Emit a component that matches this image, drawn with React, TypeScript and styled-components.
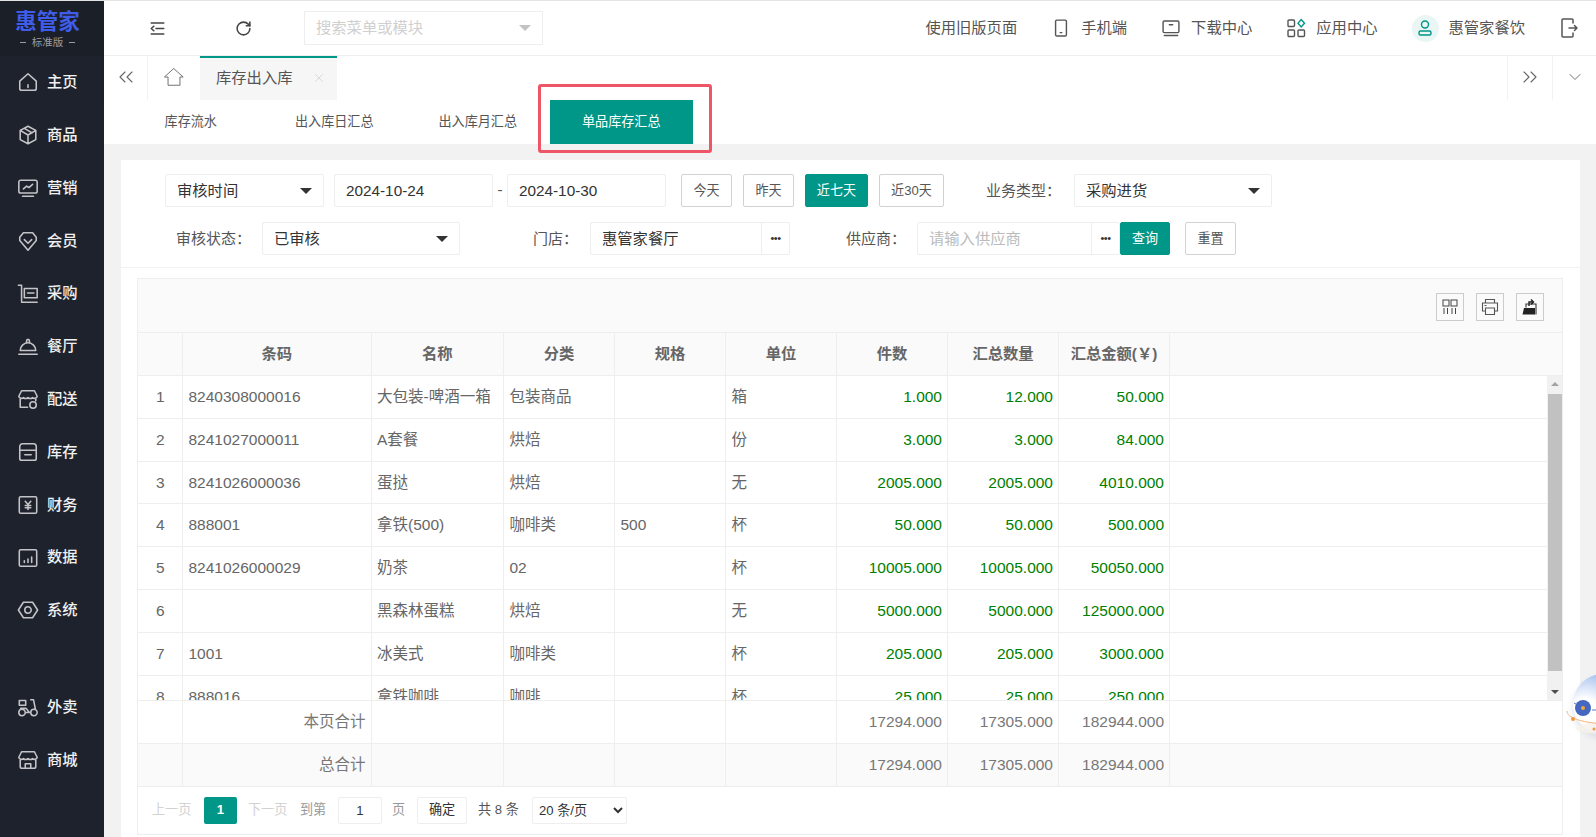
import React from 'react'
import styled, { createGlobalStyle } from 'styled-components'
import { ChevronDown, ChevronsLeft, ChevronsRight, RotateCw, X } from 'lucide-react'

const font = `"Liberation Sans", "Noto Sans CJK SC", sans-serif`
const teal = '#009688'
const COLS = '45px 188.5px 132.5px 111px 111px 111px 111px 111px 111px'

const navTop = [
  { label: '主页', d: 'M12 3 21 11v8a2 2 0 0 1-2 2H5a2 2 0 0 1-2-2v-8ZM12 15v3' },
  { label: '商品', d: 'M12 2.500 20.500 7v10L12 21.500 3.500 17V7ZM3.500 7l8.500 5 8.500-5M12 12v9.500M8 4.700l8.500 5' },
  { label: '营销', d: 'M4 3.500h16a2 2 0 0 1 2 2v10a2 2 0 0 1-2 2H4a2 2 0 0 1-2-2v-10a2 2 0 0 1 2-2ZM6 21h12M7 13l3.500-3 2.500 1.500L17 8' },
  { label: '会员', d: 'M12 22 3 11.500V8l4-5h10l4 5v3.500ZM8 10.500l4 4 4-4' },
  { label: '采购', d: 'M1.500 2.500H5V20M8 6h14v10H8ZM11.500 11h7M5 21h17' },
  { label: '餐厅', d: 'M3.500 17a8.500 8.500 0 0 1 17 0ZM10 8.500 11 5h2l1 3.500M2 21h20' },
  { label: '配送', d: 'M5 3h14l3 6a3 3 0 0 1-5 1.500 3.500 3.500 0 0 1-5 0 3.500 3.500 0 0 1-5 0A3 3 0 0 1 2 9ZM3.500 12v9h8M20.500 12v2M14 18.500a3.500 3.500 0 1 0 7 0 3.500 3.500 0 1 0-7 0' },
  { label: '库存', d: 'M6 3h12a3 3 0 0 1 3 3v4H3V6a3 3 0 0 1 3-3ZM3 10v9a2 2 0 0 0 2 2h14a2 2 0 0 0 2-2v-9M8.500 15h7' },
  { label: '财务', d: 'M4 3h16a1.500 1.500 0 0 1 1.500 1.500v15A1.500 1.500 0 0 1 20 21H4a1.500 1.500 0 0 1-1.500-1.500v-15A1.500 1.500 0 0 1 4 3ZM9 8l3 3.500L15 8M9 12.500h6M9 15h6M12 11.500V17' },
  { label: '数据', d: 'M4 3h16a1.500 1.500 0 0 1 1.500 1.500v15A1.500 1.500 0 0 1 20 21H4a1.500 1.500 0 0 1-1.500-1.500v-15A1.500 1.500 0 0 1 4 3ZM8 17v-2M12 17v-4M16 17v-6' },
  { label: '系统', d: 'M7 3.500h10L22.500 12 17 20.500H7L1.500 12ZM8.500 12a3.500 3.500 0 1 0 7 0 3.500 3.500 0 1 0-7 0' },
]

const navBottom = [
  { label: '外卖', d: 'M2 18a3.500 3.500 0 1 0 7 0 3.500 3.500 0 1 0-7 0M15 18a3.500 3.500 0 1 0 7 0 3.500 3.500 0 1 0-7 0M2.500 5h7v5h-7ZM4 13.500h6l3 4M15 4h3l2 10M9 18h6' },
  { label: '商城', d: 'M5 3h14l3 6a3 3 0 0 1-5 1.500 3.500 3.500 0 0 1-5 0 3.500 3.500 0 0 1-5 0A3 3 0 0 1 2 9ZM3.500 12v7a2 2 0 0 0 2 2h13a2 2 0 0 0 2-2v-7M9 21v-5h6v5' },
]

const rows = [
  ['1', '8240308000016', '大包装-啤酒一箱', '包装商品', '', '箱', '1.000', '12.000', '50.000'],
  ['2', '8241027000011', 'A套餐', '烘焙', '', '份', '3.000', '3.000', '84.000'],
  ['3', '8241026000036', '蛋挞', '烘焙', '', '无', '2005.000', '2005.000', '4010.000'],
  ['4', '888001', '拿铁(500)', '咖啡类', '500', '杯', '50.000', '50.000', '500.000'],
  ['5', '8241026000029', '奶茶', '02', '', '杯', '10005.000', '10005.000', '50050.000'],
  ['6', '', '黑森林蛋糕', '烘焙', '', '无', '5000.000', '5000.000', '125000.000'],
  ['7', '1001', '冰美式', '咖啡类', '', '杯', '205.000', '205.000', '3000.000'],
  ['8', '888016', '拿铁咖啡', '咖啡', '', '杯', '25.000', '25.000', '250.000'],
]

const heads = ['', '条码', '名称', '分类', '规格', '单位', '件数', '汇总数量', '汇总金额(￥)']

function Glyph({ d, size = 20 }: { d: string; size?: number }) {
  return (
    <svg width={size} height={size} viewBox="0 0 24 24" fill="none" stroke="currentColor" strokeWidth="1.7" strokeLinecap="round" strokeLinejoin="round">
      <path d={d} />
    </svg>
  )
}

function Robot() {
  return (
    <svg width="36" height="76" viewBox="0 0 36 76">
      <defs>
        <radialGradient id="ball" cx="0.2" cy="0.62" r="0.85">
          <stop offset="0.25" stopColor="#ffffff" />
          <stop offset="1" stopColor="#7ea5e6" />
        </radialGradient>
        <filter id="glow" x="-30%" y="-30%" width="160%" height="160%">
          <feGaussianBlur stdDeviation="3" />
        </filter>
      </defs>
      <circle cx="37" cy="37" r="30" fill="#b8bfd0" opacity="0.45" filter="url(#glow)" />
      <circle cx="37" cy="33" r="30" fill="url(#ball)" />
      <ellipse cx="36" cy="57" rx="26" ry="6" fill="#f7f2ea" opacity="0.8" />
      <path d="M8 32 18 37M26 39h10" stroke="#5d78c8" strokeWidth="1" />
      <circle cx="17" cy="37" r="8" fill="#4468c0" />
      <circle cx="17" cy="37" r="2" fill="#f3a43c" />
      <path d="M1 40c0 7 14 11 35 13" fill="none" stroke="#f3b478" strokeWidth="1" />
      <circle cx="7" cy="48" r="2" fill="#f09a3c" />
      <circle cx="28" cy="58" r="1.500" fill="#f09a3c" />
    </svg>
  )
}

export default function App() {
  return (
    <Page>
      <GlobalStyle />
      <Sidebar>
        <Logo>
          <LogoName>惠管家</LogoName>
          <LogoEdition>标准版</LogoEdition>
        </Logo>
        <NavGroup>
          {navTop.map((n) => (
            <NavItem key={n.label}>
              <Glyph size={22} d={n.d} />
              {n.label}
            </NavItem>
          ))}
        </NavGroup>
        <NavGroup $gap>
          {navBottom.map((n) => (
            <NavItem key={n.label}>
              <Glyph size={22} d={n.d} />
              {n.label}
            </NavItem>
          ))}
        </NavGroup>
      </Sidebar>

      <Main>
        <Header>
          <HeaderTool $w={107}>
            <Glyph size={19} d="M4 5h16M10 12h10M4 19h16M7.500 9 4 12l3.500 3" />
          </HeaderTool>
          <HeaderTool $w={93} $inset={29}>
            <RotateCw size={17} strokeWidth={2.2} />
          </HeaderTool>
          <SearchBox>
            搜索菜单或模块
            <Caret $color="#c2c2c2" />
          </SearchBox>
          <HeaderRight>
            <HeaderLink>使用旧版页面</HeaderLink>
            <HeaderLink>
              <Glyph d="M7 2.500h10a1.500 1.500 0 0 1 1.500 1.500v16a1.500 1.500 0 0 1-1.500 1.500H7A1.500 1.500 0 0 1 5.500 20V4A1.500 1.500 0 0 1 7 2.500ZM11 17.500h2" />
              手机端
            </HeaderLink>
            <HeaderLink>
              <Glyph d="M4 3.500h16a1.500 1.500 0 0 1 1.500 1.500v11a1.500 1.500 0 0 1-1.500 1.500H4A1.500 1.500 0 0 1 2.500 16V5A1.500 1.500 0 0 1 4 3.500ZM4 21h16M10 8h4" />
              下载中心
            </HeaderLink>
            <HeaderLink>
              <AppsIcon />
              应用中心
            </HeaderLink>
            <HeaderLink>
              <Avatar>
                <svg width="16" height="18" viewBox="0 0 16 18" fill="none" stroke={teal} strokeWidth="1.4">
                  <circle cx="8" cy="5.500" r="3.500" />
                  <rect x="2" y="12" width="12" height="4" rx="1.500" />
                </svg>
              </Avatar>
              惠管家餐饮
            </HeaderLink>
            <LogoutIcon />
          </HeaderRight>
        </Header>

        <TabBar>
          <TabEdge $w={44}>
            <ChevronsLeft size={24} strokeWidth={1.1} />
          </TabEdge>
          <TabEdge $w={52} $plain>
            <Glyph size={22} d="M12 3 22 12h-3.500v9h-13v-9H2Z" />
          </TabEdge>
          <ActiveTab>
            库存出入库
            <X size={14} strokeWidth={1.1} color="#c8c8c8" />
          </ActiveTab>
          <TabEdge $w={45} $push $side>
            <ChevronsRight size={24} strokeWidth={1.1} />
          </TabEdge>
          <TabEdge $w={44} $side>
            <ChevronDown size={20} strokeWidth={1.1} />
          </TabEdge>
        </TabBar>

        <SubTabs>
          <SubTab>库存流水</SubTab>
          <SubTab>出入库日汇总</SubTab>
          <SubTab>出入库月汇总</SubTab>
          <SubTab $active>单品库存汇总</SubTab>
          <Highlight />
        </SubTabs>

        <Body>
          <Card>
            <Filters>
              <FilterRow>
                <Field $w={159}>
                  审核时间
                  <Caret />
                </Field>
                <Field $w={159} $ml={10}>2024-10-24</Field>
                <Dash>-</Dash>
                <Field $w={159}>2024-10-30</Field>
                <RangeBtn $w={51} $ml={15}>今天</RangeBtn>
                <RangeBtn $w={51} $ml={11}>昨天</RangeBtn>
                <RangeBtn $w={63} $ml={11} $on>近七天</RangeBtn>
                <RangeBtn $w={65} $ml={11}>近30天</RangeBtn>
                <Label $w={70} $ml={42}>业务类型：</Label>
                <Field $w={198} $ml={18}>
                  采购进货
                  <Caret />
                </Field>
              </FilterRow>
              <FilterRow>
                <Label $w={68} $ml={11}>审核状态：</Label>
                <Field $w={198} $ml={18}>
                  已审核
                  <Caret />
                </Field>
                <Label $w={39} $ml={73}>门店：</Label>
                <Field $w={200} $ml={18}>
                  惠管家餐厅
                  <MoreBtn>•••</MoreBtn>
                </Field>
                <Label $w={54} $ml={56}>供应商：</Label>
                <Field $w={203} $ml={17} $muted>
                  请输入供应商
                  <MoreBtn>•••</MoreBtn>
                </Field>
                <RangeBtn $w={50} $on>查询</RangeBtn>
                <RangeBtn $w={51} $ml={15}>重置</RangeBtn>
              </FilterRow>
            </Filters>

            <TableBox>
              <Toolbar>
                <ToolBtn>
                  <svg width="16" height="16" viewBox="0 0 16 16" fill="none" stroke="#444" strokeWidth="1">
                    <rect x="1" y="1" width="6" height="6" />
                    <rect x="9" y="1" width="6" height="6" />
                    <path d="M2 9v6M5.500 9v6M10 9v6M13.500 9v6" />
                  </svg>
                </ToolBtn>
                <ToolBtn>
                  <svg width="18" height="18" viewBox="0 0 18 18" fill="none" stroke="#555" strokeWidth="1.100">
                    <path d="M4.500 5V1.500h9V5M4.500 13H1.500V5h15v8h-3M4.500 10h9v6.500h-9ZM3.500 7.500h2" />
                  </svg>
                </ToolBtn>
                <ToolBtn>
                  <svg width="18" height="18" viewBox="0 0 18 18">
                    <path d="M1.500 16.500 3 10h11v6.500Z" fill="#222" />
                    <path d="M5 9.500V6h10v10.500" fill="none" stroke="#333" strokeWidth="1.100" />
                    <path d="M8 8V4h3.500M10 1.500l2.500 2.500L10 6.500" fill="none" stroke="#222" strokeWidth="1.400" />
                  </svg>
                </ToolBtn>
              </Toolbar>

              <Row $shade $head>
                {heads.map((h, i) => (
                  <HeadCell key={i}>{h}</HeadCell>
                ))}
              </Row>

              <RowsWrap>
                <RowsClip>
                  {rows.map((r) => (
                    <Row key={r[0]}>
                      {r.map((c, i) => (
                        <Cell key={i} $center={i === 0} $num={i > 5}>
                          {c}
                        </Cell>
                      ))}
                    </Row>
                  ))}
                </RowsClip>
                <ScrollTrack>
                  <ScrollArrow $up />
                  <ScrollThumb />
                  <ScrollArrow />
                </ScrollTrack>
              </RowsWrap>

              <TotalRow label="本页合计" />
              <TotalRow label="总合计" shade />

              <Pager>
                <PagerText $c="#d2d2d2" $w={38}>上一页</PagerText>
                <PageNo>1</PageNo>
                <PagerText $c="#d2d2d2" $w={40} $ml={11}>下一页</PagerText>
                <PagerText $c="#999" $w={27} $ml={12}>到第</PagerText>
                <PageInput defaultValue="1" />
                <PagerText $c="#999" $w={14} $ml={10}>页</PagerText>
                <PageConfirm>确定</PageConfirm>
                <PagerText $c="#555" $w={43} $ml={11}>共 8 条</PagerText>
                <PageSize defaultValue="20">
                  <option value="20">20 条/页</option>
                </PageSize>
              </Pager>
            </TableBox>
          </Card>
        </Body>
      </Main>

      <Floater>
        <Robot />
      </Floater>
    </Page>
  )
}

function TotalRow({ label, shade }: { label: string; shade?: boolean }) {
  return (
    <Row $shade={shade} $foot>
      <Cell />
      <Cell $right>{label}</Cell>
      <Cell />
      <Cell />
      <Cell />
      <Cell />
      <Cell $right>17294.000</Cell>
      <Cell $right>17305.000</Cell>
      <Cell $right>182944.000</Cell>
    </Row>
  )
}

function AppsIcon() {
  return (
    <svg width="20" height="20" viewBox="0 0 20 20" fill="none" stroke="#555" strokeWidth="1.400">
      <rect x="2" y="2" width="6.500" height="6.500" rx="1" />
      <rect x="2" y="12" width="6.500" height="6.500" rx="1" />
      <rect x="12" y="12" width="6.500" height="6.500" rx="1" />
      <path d="M15.200 1.500 18.500 5.200 15.200 9 12 5.200Z" stroke={teal} />
    </svg>
  )
}

function LogoutIcon() {
  return (
    <svg width="20" height="22" viewBox="0 0 20 22" fill="none" stroke="#555" strokeWidth="1.500" strokeLinecap="round" strokeLinejoin="round">
      <path d="M14 6V3a1 1 0 0 0-1-1H4a1 1 0 0 0-1 1v16a1 1 0 0 0 1 1h9a1 1 0 0 0 1-1v-3M10 11h8M15.500 8.500 18 11l-2.500 2.500" />
    </svg>
  )
}

const GlobalStyle = createGlobalStyle`
  html, body {
    margin: 0;
    height: 100%;
    overflow: hidden;
    background: #f2f2f2;
  }
  * {
    box-sizing: border-box;
  }
`

const Page = styled.div`
  position: relative;
  width: 1596px;
  height: 837px;
  display: flex;
  overflow: hidden;
  border-top: 1px solid #e4e4e4;
  font-family: ${font};
  font-size: 15.3px;
  line-height: 1.2;
  color: #555;
`

const Sidebar = styled.aside`
  width: 104px;
  flex: none;
  background: #1e222c;
  color: #e8e8e8;
`

const Logo = styled.div`
  height: 55px;
  background: #1b1f28;
  display: flex;
  flex-direction: column;
  align-items: center;
  padding: 9px 9px 0 0;
`

const LogoName = styled.div`
  font-size: 21.500px;
  line-height: 24px;
  font-weight: 700;
  color: #3f5de8;
`

const LogoEdition = styled.div`
  font-size: 10.500px;
  line-height: 14px;
  margin-top: 1px;
  color: #9a9ca2;
  display: flex;
  align-items: center;
  gap: 6px;

  &::before,
  &::after {
    content: '';
    width: 6px;
    height: 1px;
    background: #9a9ca2;
  }
`

const NavGroup = styled.nav<{ $gap?: boolean }>`
  margin-top: ${({ $gap }) => ($gap ? '44px' : '0')};
`

const NavItem = styled.div`
  height: 52.800px;
  display: flex;
  align-items: center;
  gap: 8px;
  padding-left: 17px;
  color: #f0f0f0;
  font-weight: 500;

  svg {
    color: #c4c4c8;
  }
`

const Main = styled.main`
  flex: 1;
  min-width: 0;
  display: flex;
  flex-direction: column;
`

const Header = styled.header`
  height: 55px;
  flex: none;
  background: #fff;
  border-bottom: 1px solid #f0f0f0;
  display: flex;
  align-items: center;
`

const HeaderTool = styled.div<{ $w: number; $inset?: number }>`
  width: ${({ $w }) => $w}px;
  display: flex;
  justify-content: center;
  padding-right: ${({ $inset }) => $inset || 0}px;
  color: #444;
`

const SearchBox = styled.div`
  width: 239px;
  height: 34px;
  padding: 0 11px;
  border: 1px solid #eee;
  display: flex;
  align-items: center;
  justify-content: space-between;
  color: #d0d0d0;
`

const HeaderRight = styled.div`
  margin-left: auto;
  padding-right: 17px;
  display: flex;
  align-items: center;
  gap: 34px;
`

const HeaderLink = styled.div`
  display: flex;
  align-items: center;
  gap: 10px;
  color: #555;
`

const Avatar = styled.span`
  width: 27px;
  height: 27px;
  border-radius: 50%;
  background: #e9f6f4;
  display: flex;
  align-items: center;
  justify-content: center;
`

const Caret = styled.i<{ $color?: string }>`
  margin-left: auto;
  width: 0;
  height: 0;
  border-style: solid;
  border-width: 6px 6.500px 0;
  border-color: ${({ $color }) => $color || '#333'} transparent transparent;
`

const TabBar = styled.div`
  height: 44px;
  flex: none;
  background: #fff;
  display: flex;
  box-shadow: 0 1px 2px rgba(0, 0, 0, 0.1);
  position: relative;
`

const TabEdge = styled.div<{ $w: number; $plain?: boolean; $push?: boolean; $side?: boolean }>`
  width: ${({ $w }) => $w}px;
  margin-left: ${({ $push }) => ($push ? 'auto' : '0')};
  padding-bottom: 3px;
  display: flex;
  align-items: center;
  justify-content: center;
  color: #666;
  border-right: ${({ $plain, $side }) => ($plain || $side ? 'none' : '1px solid #f2f2f2')};
  border-left: ${({ $side }) => ($side ? '1px solid #f2f2f2' : 'none')};

  svg[stroke-width='1.7'] {
    stroke-width: 1;
  }
`

const ActiveTab = styled.div`
  width: 137px;
  background: #f6f6f6;
  border-top: 2px solid ${teal};
  padding: 0 11px 2px 16px;
  display: flex;
  align-items: center;
  justify-content: space-between;
  color: #555;
`

const SubTabs = styled.div`
  position: relative;
  height: 44px;
  flex: none;
  background: #fff;
  display: flex;
  padding-left: 15px;
`

const SubTab = styled.div<{ $active?: boolean }>`
  width: 143.500px;
  display: flex;
  align-items: center;
  justify-content: center;
  font-size: 13.100px;
  background: ${({ $active }) => ($active ? teal : 'transparent')};
  color: ${({ $active }) => ($active ? '#fff' : '#555')};
`

const Highlight = styled.div`
  position: absolute;
  left: 434px;
  top: -16px;
  width: 174px;
  height: 69px;
  border: 3px solid #ee5567;
  border-radius: 3px;
  pointer-events: none;
`

const Body = styled.div`
  flex: 1;
  min-height: 0;
  padding: 16px 16px 0 17px;
`

const Card = styled.section`
  height: 100%;
  background: #fff;
`

const Filters = styled.div`
  padding: 14px 44px 12px;
  border-bottom: 1px solid #f2f2f2;
  display: flex;
  flex-direction: column;
  gap: 15px;
`

const FilterRow = styled.div`
  display: flex;
  align-items: center;
  height: 33px;
`

const Field = styled.div<{ $w: number; $ml?: number; $muted?: boolean }>`
  position: relative;
  width: ${({ $w }) => $w}px;
  height: 33px;
  margin-left: ${({ $ml }) => $ml || 0}px;
  padding: 1.500px 11px 0;
  border: 1px solid #eee;
  border-radius: 2px;
  display: flex;
  align-items: center;
  color: ${({ $muted }) => ($muted ? '#bbb' : '#333')};
  background: #fff;
`

const Dash = styled.span`
  width: 14px;
  text-align: center;
`

const RangeBtn = styled.button<{ $w: number; $ml?: number; $on?: boolean }>`
  width: ${({ $w }) => $w}px;
  height: 33px;
  margin-left: ${({ $ml }) => $ml || 0}px;
  padding: 0;
  font: inherit;
  font-size: 13.100px;
  border: 1px solid ${({ $on }) => ($on ? teal : '#d2d2d2')};
  border-radius: 2px;
  background: ${({ $on }) => ($on ? teal : '#fff')};
  color: ${({ $on }) => ($on ? '#fff' : '#555')};
`

const Label = styled.span<{ $w: number; $ml?: number }>`
  width: ${({ $w }) => $w}px;
  margin-left: ${({ $ml }) => $ml || 0}px;
  white-space: nowrap;
  font-size: 15px;
  color: #555;
`

const MoreBtn = styled.span`
  position: absolute;
  right: 0;
  top: 0;
  bottom: 0;
  width: 28px;
  border-left: 1px solid #eee;
  display: flex;
  align-items: center;
  justify-content: center;
  font-size: 11px;
  letter-spacing: -0.500px;
  color: #333;
`

const TableBox = styled.div`
  margin: 10px 17px 0 16px;
  border: 1px solid #eee;
`

const Toolbar = styled.div`
  height: 54px;
  background: #fafafa;
  border-bottom: 1px solid #eee;
  display: flex;
  align-items: center;
  justify-content: flex-end;
  gap: 12px;
  padding: 2px 18px 0 0;
`

const ToolBtn = styled.span`
  width: 28px;
  height: 28px;
  border: 1px solid #ccc;
  display: flex;
  align-items: center;
  justify-content: center;
`

const Row = styled.div<{ $shade?: boolean; $head?: boolean; $foot?: boolean }>`
  display: grid;
  grid-template-columns: ${COLS};
  height: ${({ $head }) => ($head ? '43px' : '42.800px')};
  flex: none;
  background: ${({ $shade }) => ($shade ? '#fafafa' : '#fff')};
  border-bottom: 1px solid #eee;
`

const HeadCell = styled.div`
  display: flex;
  align-items: center;
  justify-content: center;
  border-right: 1px solid #eee;
  font-weight: 700;
  color: #666;
  white-space: nowrap;
`

const Cell = styled.div<{ $center?: boolean; $num?: boolean; $right?: boolean }>`
  display: flex;
  align-items: center;
  padding: 1px 5px 0 5.500px;
  font-size: 15.500px;
  white-space: nowrap;
  overflow: hidden;
  border-right: 1px solid #eee;
  justify-content: ${({ $center, $num, $right }) => ($center ? 'center' : $num || $right ? 'flex-end' : 'flex-start')};
  color: ${({ $num, $right }) => ($num ? '#008000' : $right ? '#777' : '#666')};
`

const RowsWrap = styled.div`
  height: 325px;
  display: flex;
  justify-content: space-between;
  border-bottom: 1px solid #eee;
`

const RowsClip = styled.div`
  flex: 1;
  height: 100%;
  overflow: hidden;
`

const ScrollTrack = styled.div`
  width: 15px;
  background: #f1f1f1;
  display: flex;
  flex-direction: column;
  align-items: center;
  justify-content: space-between;
  padding: 6px 0;
`

const ScrollArrow = styled.i<{ $up?: boolean }>`
  width: 0;
  height: 0;
  border-left: 4px solid transparent;
  border-right: 4px solid transparent;
  border-${({ $up }) => ($up ? 'bottom' : 'top')}: 4px solid ${({ $up }) => ($up ? '#a3a3a3' : '#505050')};
`

const ScrollThumb = styled.div`
  width: 14px;
  height: 277px;
  margin: 4px 0 15px;
  background: #c1c1c1;
`

const Pager = styled.div`
  height: 47px;
  display: flex;
  align-items: center;
  padding-left: 14px;
  font-size: 13.100px;
`

const PagerText = styled.span<{ $c: string; $w: number; $ml?: number }>`
  width: ${({ $w }) => $w}px;
  margin-left: ${({ $ml }) => $ml || 0}px;
  color: ${({ $c }) => $c};
  white-space: nowrap;
`

const PageNo = styled.span`
  width: 33px;
  height: 27px;
  margin-left: 14px;
  border-radius: 2px;
  background: ${teal};
  color: #fff;
  font-weight: 700;
  display: flex;
  align-items: center;
  justify-content: center;
`

const PageInput = styled.input`
  width: 44px;
  height: 27px;
  margin-left: 11px;
  border: 1px solid #eee;
  border-radius: 2px;
  text-align: center;
  font: inherit;
  color: #333;
  outline: none;
`

const PageConfirm = styled.button`
  width: 50px;
  height: 27px;
  margin-left: 11px;
  padding: 0;
  border: 1px solid #eee;
  border-radius: 2px;
  background: #fff;
  font: inherit;
  color: #333;
`

const PageSize = styled.select`
  width: 95px;
  height: 27px;
  margin-left: 11px;
  padding-left: 2px;
  border: 1px solid #eee;
  border-radius: 2px;
  background: #fff;
  font: inherit;
  color: #333;
  outline: none;
`

const Floater = styled.div`
  position: absolute;
  right: 0;
  top: 670px;
  width: 30px;
  height: 76px;
  overflow: hidden;
`
